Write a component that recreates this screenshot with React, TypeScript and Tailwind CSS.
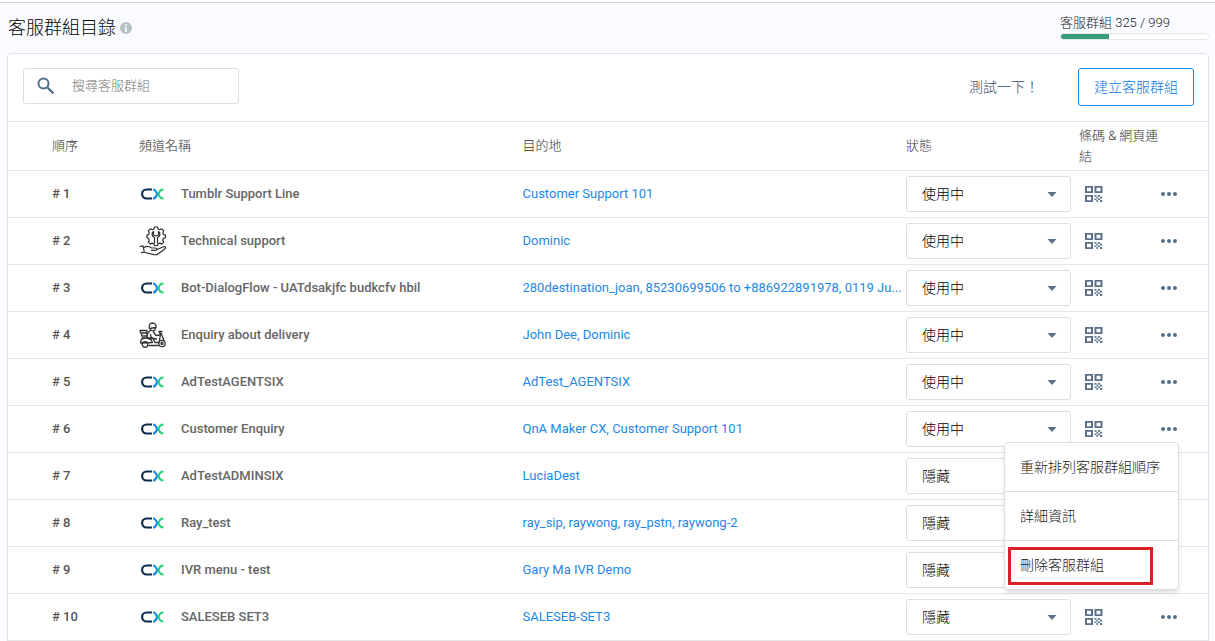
import React, { useState } from 'react'

interface Queue {
  id: number
  name: string
  icon: 'cx' | 'support' | 'delivery'
  destination: string
  status: 'active' | 'hidden'
}

const queues: Queue[] = [
  { id: 1, name: 'Tumblr Support Line', icon: 'cx', destination: 'Customer Support 101', status: 'active' },
  { id: 2, name: 'Technical support', icon: 'support', destination: 'Dominic', status: 'active' },
  {
    id: 3,
    name: 'Bot-DialogFlow - UATdsakjfc budkcfv hbil',
    icon: 'cx',
    destination: '280destination_joan, 85230699506 to +886922891978, 0119 Ju...',
    status: 'active',
  },
  { id: 4, name: 'Enquiry about delivery', icon: 'delivery', destination: 'John Dee, Dominic', status: 'active' },
  { id: 5, name: 'AdTestAGENTSIX', icon: 'cx', destination: 'AdTest_AGENTSIX', status: 'active' },
  { id: 6, name: 'Customer Enquiry', icon: 'cx', destination: 'QnA Maker CX, Customer Support 101', status: 'active' },
  { id: 7, name: 'AdTestADMINSIX', icon: 'cx', destination: 'LuciaDest', status: 'hidden' },
  { id: 8, name: 'Ray_test', icon: 'cx', destination: 'ray_sip, raywong, ray_pstn, raywong-2', status: 'hidden' },
  { id: 9, name: 'IVR menu - test', icon: 'cx', destination: 'Gary Ma IVR Demo', status: 'hidden' },
  { id: 10, name: 'SALESEB SET3', icon: 'cx', destination: 'SALESEB-SET3', status: 'hidden' },
]

const CxLogo = () => (
  <svg width="28" height="28" viewBox="0 0 28 28" fill="none" strokeWidth="2.2">
    <path d="M13 9.5H7.600a4.500 4.500 0 0 0 0 9H13" stroke="#0d2b4e" />
    <path d="M14 9.500c2.200 0 3.200 1.800 4.200 4.500-1 2.700-2 4.500-4.200 4.500" stroke="#1e88e5" />
    <path d="M24.500 9.500c-3 0-4.300 1.900-5 4.500.7 2.600 2 4.500 5 4.500" stroke="#2bd07b" />
  </svg>
)

const SupportIcon = () => (
  <svg width="28" height="30" viewBox="0 0 28 30" fill="none" stroke="#2f2f2f" strokeWidth="1.2" strokeLinecap="round" strokeLinejoin="round">
    <path d="M15.500 1h3l.6 2 1.800.8 1.900-1 2 2-1 1.900.7 1.700 2 .6v2.800l-2 .6-.7 1.800 1 1.900-2 2-1.900-1-1.800.7-.6 1.700h-3l-.6-1.700-1.700-.7-1.900 1-2-2 1-1.900-.8-1.800-1.500-.6V9l1.500-.6.8-1.700-1-1.900 2-2 1.900 1 1.700-.8z" />
    <path d="M14.500 5.500c-2.300 1.500-1.800 5 1 6v5.500M19.500 5.500c2.300 1.500 1.800 5-1 6v5.500M14.500 5.500v3.500l2.500 1 2.500-1V5.500" />
    <path d="M1 20.500l3-.7 1.300 6.200-2.800.6M5 21.500c3-1.800 5.500-1 7.500.5h4c1.800 0 1.800 2.300 0 2.400h-4M18 23.500l6.500-2.700c1.900-.7 2.800 1 1.300 2.200l-6.500 4.700c-1.300 1-3 1.200-4.500.9L6 26.500" />
  </svg>
)

const DeliveryIcon = () => (
  <svg width="28" height="28" viewBox="0 0 28 28" fill="none" stroke="#333" strokeWidth="1.300" strokeLinecap="round" strokeLinejoin="round">
    <path d="M10.500 7.500C9.500 3.500 11 2 13.500 2S17.500 4 17 6.500l-6.500 1M11.500 8c.3 2.500 4.500 2.800 5-.8" />
    <path d="M11.500 9.500c-3 1.500-3.500 5-3 8h6l3 .5M14.500 11l2.500 3.500 4-.5M11.500 13.500l1 4" />
    <path d="M1 9.500h7v5.500H3zM3 12h5M3 17h11l2 4.500h4l1.500-8L20 10.500h3M22 12l3 7.500M1.500 22c0-3.500 2-5 5.500-5s5.500 1.500 6.500 4.500l-12 .5z" />
    <circle cx="6" cy="23.500" r="2.800" />
    <circle cx="23" cy="22.500" r="3.200" />
    <circle cx="23" cy="22.500" r="1" />
    <path d="M10 24.500h9" />
  </svg>
)

const QrIcon = () => (
  <svg width="18" height="18" viewBox="0 0 18 18" fill="#5b7089">
    <path fillRule="evenodd" d="M0 1h8v7H0zM2 2.700v3.600h4V2.700zM9.500 1h8v7h-8zM11.500 2.700v3.600h4V2.700zM0 10h8v7H0zM2 11.700v3.600h4v-3.600z" />
    <path d="M9.500 10h2v1.700h-2zM13 10h2v1.700h-2zM11.500 11.700H13v1.700h-1.500zM15 11.700h2.200v1.700H15zM9.500 13.400h2v1.700h-2zM13 13.400h2v1.700h-2zM11.500 15.100H13V17h-1.500zM15 15.100h2.200V17H15z" />
  </svg>
)

const QueueIcon = ({ icon }: { icon: Queue['icon'] }) => {
  if (icon === 'support') return <SupportIcon />
  if (icon === 'delivery') return <DeliveryIcon />
  return <CxLogo />
}

const StatusSelect = ({ queue }: { queue: Queue }) => {
  const [status, setStatus] = useState<string>(queue.status)

  return (
    <div className="relative w-[165px]">
      <select
        aria-label={`${queue.name} 狀態`}
        value={status}
        onChange={(e) => setStatus(e.target.value)}
        className="block h-9 w-full appearance-none rounded-[3px] border border-[#dcdfe2] bg-white pl-[15px] text-sm font-light text-black"
      >
        <option value="active">使用中</option>
        <option value="hidden">隱藏</option>
      </select>
      <svg className="pointer-events-none absolute top-4 right-3.5" width="10" height="5" viewBox="0 0 10 5" fill="#5b7089">
        <path d="M.5 0h9L5 5z" />
      </svg>
    </div>
  )
}

const ActionMenu = () => (
  <div role="menu" className="absolute top-9 right-[29px] z-10 w-[175px] rounded border border-[#dcdfe2] bg-white text-sm font-light text-[#222] shadow-md">
    <button role="menuitem" className="flex h-12 w-full items-center px-[15px]">重新排列客服群組順序</button>
    <button role="menuitem" className="flex h-[49px] w-full items-center border-t border-[#dcdfe2] px-[15px]">詳細資訊</button>
    <button role="menuitem" className="relative flex h-[49px] w-full items-center border-t border-[#dcdfe2] px-[15px]">
      刪除客服群組
      <span className="absolute top-1.5 left-[3px] h-[38px] w-[145px] border-3 border-[#da2128]" />
    </button>
  </div>
)

const App = () => {
  const [openMenu, setOpenMenu] = useState<number | null>(6)
  const [search, setSearch] = useState('')

  return (
    <div className="mt-0.5 min-h-screen border-t border-[#cfd2d8] bg-[#fafbff] pr-1.5 pl-[7px] font-[Roboto,'Noto_Sans_CJK_TC',sans-serif] text-[13px]">
      <header className="flex h-[50px] items-center justify-between pl-px">
        <div className="flex items-center gap-[3px]">
          <h1 className="text-lg font-light text-black">客服群組目錄</h1>
          <svg width="14" height="14" viewBox="0 0 14 14">
            <circle cx="7" cy="7" r="6" fill="#b5c1c5" />
            <path d="M6.200 3h1.600v1.600H6.200zM6.200 5.800h1.600V11H6.200z" fill="#fff" />
          </svg>
        </div>
        <div className="w-[149px] pb-1">
          <label htmlFor="usage" className="block leading-5 font-light text-[#222]">客服群組 325 / 999</label>
          <div id="usage" role="progressbar" aria-valuenow={325} aria-valuemax={999} className="h-[7px] overflow-hidden rounded-full border border-[#e4e7ea] bg-white">
            <div className="h-full bg-[#3a9b7a]" style={{ width: `${(325 / 999) * 100}%` }} />
          </div>
        </div>
      </header>

      <main className="rounded-t border border-[#dfe2e5] bg-white">
        <div className="flex h-[67px] items-start justify-between pt-3.5 pr-3.5 pl-[15px]">
          <div className="flex h-9 w-[216px] items-center rounded-[3px] border border-[#dcdfe2] px-3">
            <svg className="shrink-0" width="20" height="20" viewBox="0 0 20 20" fill="none" stroke="#54708f" strokeWidth="2">
              <circle cx="7.500" cy="7.500" r="5" />
              <path d="M11.500 11.500l6 6" strokeWidth="2.400" />
            </svg>
            <input
              type="text"
              aria-label="搜尋客服群組"
              value={search}
              onChange={(e) => setSearch(e.target.value)}
              placeholder="搜尋客服群組"
              className="ml-4 w-full min-w-0 bg-transparent font-light outline-none placeholder:text-[#777]"
            />
          </div>
          <div className="flex items-center gap-[39px] text-sm font-light">
            <button className="text-[#2f4766]">測試一下！</button>
            <button className="h-[38px] rounded-[3px] border border-[#1e88e5] px-[15px] text-[#0877dd]">建立客服群組</button>
          </div>
        </div>

        <table className="w-full table-fixed border-collapse text-left">
          <thead>
            <tr className="h-[49px] border-t border-[#e4e6e8] text-[#333]">
              <th className="w-[131px] pl-11 font-light">順序</th>
              <th className="font-light">頻道名稱</th>
              <th className="font-light">目的地</th>
              <th className="w-[173px] font-light">狀態</th>
              <th className="w-20 leading-[21px] font-light">條碼 &amp; 網頁連結</th>
              <th className="w-[49px]" aria-label="操作" />
            </tr>
          </thead>
          <tbody>
            {queues.map((queue) => (
              <tr key={queue.id} className="h-[47px] border-y border-[#e4e6e8]">
                <td className="pl-11 font-medium text-[#555]"># {queue.id}</td>
                <td>
                  <div className="flex items-center gap-3.5 font-medium text-[#666]">
                    <QueueIcon icon={queue.icon} />
                    {queue.name}
                  </div>
                </td>
                <td>
                  <a href="#" className="block truncate text-[#1e88e5]">{queue.destination}</a>
                </td>
                <td><StatusSelect queue={queue} /></td>
                <td className="pl-1.5">
                  <button aria-label="條碼" className="block"><QrIcon /></button>
                </td>
                <td className="relative">
                  <button
                    aria-label="更多"
                    onClick={() => setOpenMenu(openMenu === queue.id ? null : queue.id)}
                    className="flex h-9 items-center px-0.5"
                  >
                    <svg width="16" height="4" viewBox="0 0 16 4" fill="#54708f">
                      <circle cx="2" cy="2" r="2" />
                      <circle cx="8" cy="2" r="2" />
                      <circle cx="14" cy="2" r="2" />
                    </svg>
                  </button>
                  {openMenu === queue.id && <ActionMenu />}
                </td>
              </tr>
            ))}
          </tbody>
        </table>
      </main>
    </div>
  )
}

export default App
